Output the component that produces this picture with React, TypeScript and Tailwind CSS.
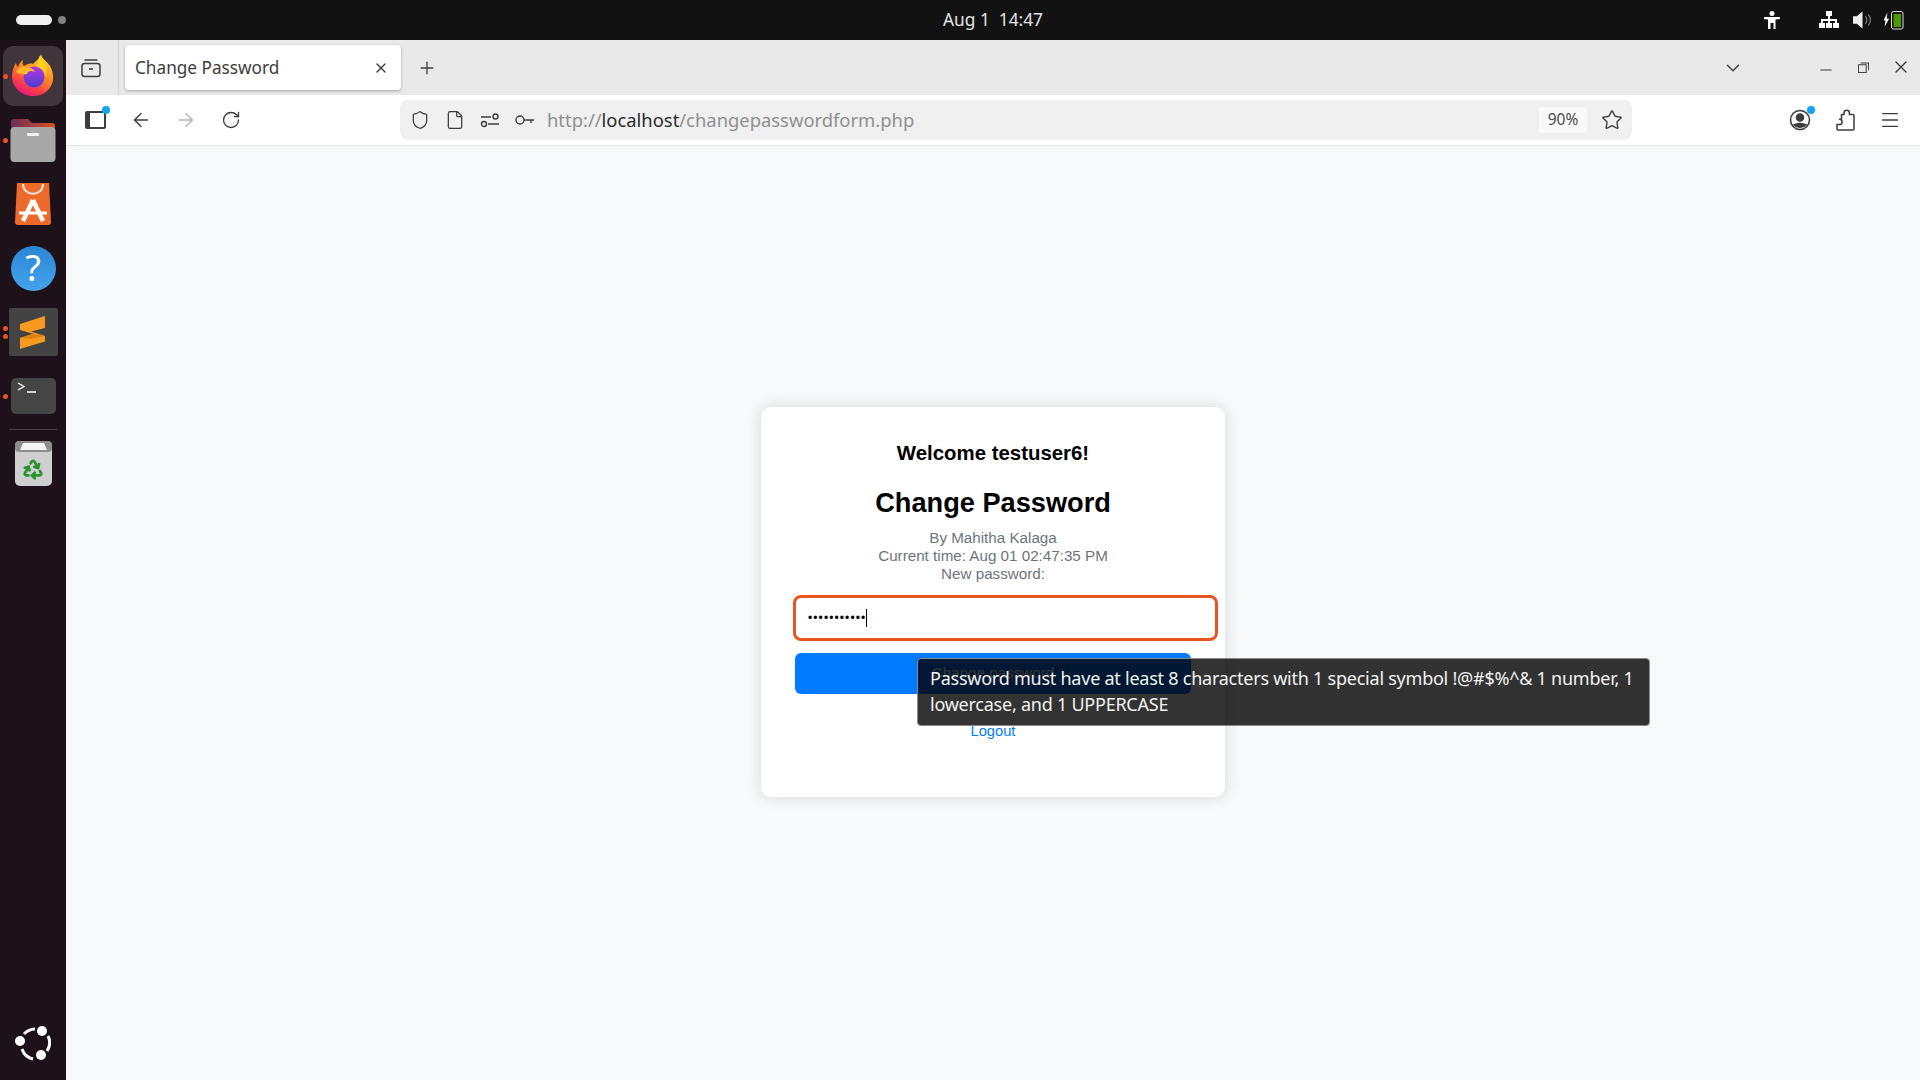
import React from 'react';
import { ArrowLeft, ArrowRight, RotateCw, Shield, File, Star, Menu, X, Plus, ChevronDown, Minus, Recycle } from 'lucide-react';

const ubuntu = { fontFamily: '"Noto Sans", sans-serif' };

function Firefox() {
  return (
    <svg viewBox="0 0 44 44" className="w-[44px] h-[44px] -translate-y-[2px]">
      <defs>
        <linearGradient id="ff1" x1="0.8" y1="0" x2="0.3" y2="1">
          <stop offset="0" stopColor="#ffe226" />
          <stop offset="0.45" stopColor="#ff8a1f" />
          <stop offset="0.8" stopColor="#ff3750" />
          <stop offset="1" stopColor="#e31587" />
        </linearGradient>
        <linearGradient id="ff2" x1="0.5" y1="0" x2="0.5" y2="1">
          <stop offset="0" stopColor="#b833e1" />
          <stop offset="1" stopColor="#4a3fd0" />
        </linearGradient>
      </defs>
      <path d="M30 2c1 5 5 6 9 12 4 7 4 15 1 20-4 7-11 10-18 10C10 44 1 35 1 24c0-5 2-10 4-13 0 2 1 3 2 4 1-3 3-6 5-7-1 3 0 5 1 6 3-2 6-3 9-2 3-3 7-6 8-10z" fill="url(#ff1)" />
      <circle cx="23" cy="25" r="10.5" fill="url(#ff2)" />
      <path d="M5 20c3-5 8-7 13-5 3 1 5 3 6 5-4-2-7-1-8 2-4 1-8 0-11-2z" fill="#ffb52e" />
      <path d="M28 4c4 4 9 10 7 21-1-6-5-10-10-11 2-3 3-6 3-10z" fill="#ffd31f" />
    </svg>
  );
}

function Files() {
  return (
    <svg viewBox="0 0 46 44" className="w-[46px] h-[44px]">
      <defs>
        <linearGradient id="fo" x1="0" y1="0" x2="1" y2="0">
          <stop offset="0" stopColor="#6d2c5a" />
          <stop offset="1" stopColor="#d9531e" />
        </linearGradient>
      </defs>
      <path d="M1 4a3 3 0 0 1 3-3h14l4 4h20a3 3 0 0 1 3 3v14H1z" fill="url(#fo)" />
      <rect x="0.5" y="9" width="45" height="35" rx="4" fill="#a8a8a8" />
      <rect x="17" y="15" width="12" height="3" rx="1" fill="#f2f2f2" />
    </svg>
  );
}

function Store() {
  return (
    <svg viewBox="0 0 36 42" className="w-[36px] h-[42px]">
      <path d="M2 0h32l2 39a3 3 0 0 1-3 3H3a3 3 0 0 1-3-3z" fill="#ee6a2c" />
      <path d="M8 1c0 13 20 13 20 0" fill="none" stroke="#f8e6dc" strokeWidth="2" />
      <path d="M18 17 8 38M18 17l10 21" stroke="#fff" strokeWidth="4.500" fill="none" />
      <path d="M4 30h28" stroke="#fff" strokeWidth="3" />
    </svg>
  );
}

function Help() {
  return (
    <div className="w-[45px] h-[45px] rounded-full bg-linear-to-b from-[#2a86d6] to-[#45a3ec] flex items-center justify-center text-white text-[36px] leading-none" style={ubuntu}>?</div>
  );
}

function Sublime() {
  return (
    <div className="w-[49px] h-[48px] rounded-[2px] bg-[#434343] flex items-center justify-center">
      <svg viewBox="0 0 26 33" className="w-[26px] h-[33px]">
        <path d="M0 8 25 0v12l-14 3.500L25 20v5.500L0 33V22l13-4.300L0 14z" fill="#f79a1f" />
        <path d="M0 22l13-4.300 12 2.300-14 3z" fill="#e0820f" />
      </svg>
    </div>
  );
}

function Terminal() {
  return (
    <div className="w-[45px] h-[36px] rounded-[5px] bg-[#454545] relative">
      <svg viewBox="0 0 20 12" className="absolute left-[6px] top-[4px] w-[20px] h-[12px]">
        <path d="M1 1l6 3.500L1 8M10 10h9" stroke="#fff" strokeWidth="1.400" fill="none" />
      </svg>
    </div>
  );
}

function Trash() {
  return (
    <div className="w-[37px] h-[45px] rounded-[5px] bg-[#cfcfcf] relative flex flex-col items-center">
      <svg viewBox="0 0 37 11" className="w-[37px] h-[11px]">
        <rect x="0" y="0" width="37" height="11" rx="4" fill="#8d8d8d" />
        <path d="M5 9 8 2h21l3 7z" fill="#f5f5f5" />
      </svg>
      <Recycle size={22} strokeWidth={3} className="text-[#2a9330] mt-[6px]" />
    </div>
  );
}

function Ubuntu() {
  return (
    <svg viewBox="0 0 36 36" className="w-[36px] h-[36px]">
      <path d="M9 8a15 15 0 0 1 11-5M33 10a15 15 0 0 1-1 15M18 33a15 15 0 0 1-11-10" fill="none" stroke="#fff" strokeWidth="3" />
      <circle cx="27" cy="5" r="5" fill="#fff" />
      <circle cx="5" cy="15" r="5" fill="#fff" />
      <circle cx="26" cy="29" r="5" fill="#fff" />
    </svg>
  );
}

function DockItem({ dots = 0, children }: { dots?: number; children: React.ReactNode }) {
  return (
    <div className="h-[64px] flex items-center justify-center relative">
      {dots > 0 && (
        <div className="absolute left-[3px] top-0 bottom-0 flex flex-col justify-center gap-[3px]">
          {Array.from({ length: dots }).map((_, i) => (
            <span key={i} className="w-[5px] h-[5px] rounded-full bg-[#e95420]" />
          ))}
        </div>
      )}
      {children}
    </div>
  );
}

function Dock() {
  return (
    <aside className="w-[66px] shrink-0 bg-[#1d1219] flex flex-col">
      <div className="pt-[4px] flex flex-col">
        <DockItem dots={1}>
          <div className="w-[60px] h-[60px] rounded-[10px] bg-[#3f353a] flex items-center justify-center">
            <Firefox />
          </div>
        </DockItem>
        <DockItem dots={1}><Files /></DockItem>
        <DockItem><Store /></DockItem>
        <DockItem><Help /></DockItem>
        <DockItem dots={2}><Sublime /></DockItem>
        <DockItem dots={1}><Terminal /></DockItem>
      </div>
      <div className="mx-[9px] h-px bg-[#4a4046] mt-[1px]" />
      <div className="mt-[1px]"><DockItem><Trash /></DockItem></div>
      <div className="mt-auto pb-[18px] flex justify-center"><Ubuntu /></div>
    </aside>
  );
}

function TopBar() {
  return (
    <header className="h-[40px] shrink-0 bg-[#121212] flex items-center px-[16px] relative text-white">
      <span className="w-[36px] h-[10px] rounded-full bg-[#f0f0f0]" />
      <span className="w-[8px] h-[8px] rounded-full bg-[#808080] ml-[6px]" />
      <div className="absolute left-[933px] w-[120px] text-center text-[17.300px] text-[#e4e4e4] whitespace-pre" style={ubuntu}>Aug 1  14:47</div>
      <div className="ml-auto flex items-center">
        <svg viewBox="0 0 16 18" className="w-[16px] h-[18px] mr-[39px]" fill="#fff">
          <circle cx="8" cy="2.500" r="2.500" />
          <path d="M0 6h16v2l-4.500.5V18H9.500v-6h-3v6H4V8.500L0 8z" />
        </svg>
        <svg viewBox="0 0 20 18" className="w-[20px] h-[18px] mr-[14px]" fill="#fff">
          <path d="M7 0h6v5h-2v3h7v4h2v5h-6v-5h2V10h-5v2h2v5H7v-5h2v-2H4v2h2v5H0v-5h2V8h7V5H7z" />
        </svg>
        <svg viewBox="0 0 20 18" className="w-[19px] h-[18px] mr-[12px]" fill="none">
          <path d="M0 5h4l6-5v18l-6-5H0z" fill="#eee" />
          <path d="M13 5c2 2 2 6 0 8M16 3c3 3 3 9 0 12" stroke="#888" strokeWidth="1.200" />
        </svg>
        <svg viewBox="0 0 20 20" className="w-[20px] h-[20px]">
          <path d="M4 1 0 10h2l-1 7 5-9H3.500z" fill="#fff" transform="translate(-0.300 1.500) scale(0.900)" />
          <rect x="7.500" y="1.500" width="11.500" height="17.500" rx="2" fill="none" stroke="#ddd" />
          <rect x="9.500" y="4" width="7.500" height="13" fill="#4e9a06" />
        </svg>
      </div>
    </header>
  );
}

function TabBar() {
  return (
    <div className="h-[55px] shrink-0 bg-[#e9e9e9] flex items-center relative">
      <div className="w-[53px] h-full border-r border-[#cfcfcf] flex items-center justify-center">
        <svg viewBox="0 0 20 20" className="w-[20px] h-[20px] -ml-[3px]" fill="none" stroke="#3d3d3d" strokeWidth="1.500">
          <rect x="1" y="5.500" width="18" height="13" rx="2.500" />
          <path d="M3.500 2h13M8 11h4" />
        </svg>
      </div>
      <div className="ml-[6px] w-[276px] h-[45px] rounded-[4px] bg-white shadow-[0_1px_3px_rgba(0,0,0,0.3)] flex items-center pl-[10px] pr-[12px]">
        <span className="text-[17.200px] text-[#3d3d3d]" style={ubuntu}>Change Password</span>
        <X className="ml-auto text-[#3d3d3d]" size={16} />
      </div>
      <Plus className="ml-[16px] text-[#3d3d3d]" size={20} strokeWidth={1.6} />
      <ChevronDown className="ml-auto mr-[176px] text-[#3d3d3d]" size={22} strokeWidth={1.6} />
      <div className="absolute right-[9px] top-[17px] flex items-center gap-[19px] text-[#3d3d3d]">
        <Minus size={18} strokeWidth={1.6} className="translate-y-[3px] mr-[4px]" />
        <svg viewBox="0 0 12 12" className="w-[11px] h-[11px]" fill="none" stroke="#3d3d3d" strokeWidth="1.100">
          <rect x="0.500" y="3" width="8.500" height="8.500" />
          <path d="M3 1h8.500v8" />
        </svg>
        <X size={20} strokeWidth={1.6} className="ml-[3px]" />
      </div>
    </div>
  );
}

function Toolbar() {
  return (
    <div className="h-[51px] shrink-0 bg-white border-b border-[#e4e6ea] flex items-center text-[#3d3d3d]">
      <div className="w-[334px] shrink-0 flex items-center pl-[19px] gap-[23px]">
        <div className="relative w-[21px] h-[18px] mr-[1px] rounded-[2px] border-2 border-l-[5px] border-[#3d3d3d]">
          <span className="absolute -right-[6px] -top-[7px] w-[8px] h-[8px] rounded-full bg-[#13a5f2]" />
        </div>
        <ArrowLeft size={22} strokeWidth={1.6} />
        <ArrowRight size={22} strokeWidth={1.6} className="text-[#b4b4b4]" />
        <RotateCw size={20} strokeWidth={1.6} className="ml-[1px]" />
      </div>
      <div className="w-[1232px] h-[40px] rounded-[8px] bg-[#f0f0f0] flex items-center pl-[10px] pr-[9px]">
        <Shield size={20} strokeWidth={1.5} />
        <File size={20} strokeWidth={1.5} className="ml-[15px]" />
        <svg viewBox="0 0 20 20" className="w-[20px] h-[20px] ml-[15px]" fill="none" stroke="#3d3d3d" strokeWidth="1.400">
          <path d="M1 7h10M8 14h11" />
          <circle cx="15.500" cy="6.500" r="2.500" />
          <circle cx="4" cy="14" r="2.500" />
        </svg>
        <svg viewBox="0 0 20 12" className="w-[20px] h-[12px] ml-[15px]" fill="none" stroke="#3d3d3d" strokeWidth="1.400">
          <circle cx="5" cy="6" r="4" />
          <path d="M9 6h10M16 6v3" />
        </svg>
        <div className="ml-[12px] text-[18.400px] text-[#8f8f8f]" style={ubuntu}>
          http://<span className="text-[#2b2b2b]">localhost</span>/changepasswordform.php
        </div>
        <div className="ml-auto w-[48px] h-[26px] rounded-[4px] bg-[#f9f9f9] flex items-center justify-center text-[15.500px] text-[#4a4a4a]" style={ubuntu}>90%</div>
        <Star size={22} strokeWidth={1.5} className="ml-[14px]" />
      </div>
      <div className="flex-1 flex items-center justify-end pr-[19px] gap-[24px]">
        <div className="relative w-[22px] h-[22px]">
          <svg viewBox="0 0 22 22" className="w-[22px] h-[22px]" fill="none" stroke="#3d3d3d" strokeWidth="1.600">
            <circle cx="11" cy="11" r="9.500" />
            <circle cx="11" cy="8.500" r="3.500" fill="#3d3d3d" />
            <path d="M5 16c3-2 9-2 12 0-3 3-9 3-12 0z" fill="#3d3d3d" />
          </svg>
          <span className="absolute -right-[4px] -top-[3px] w-[8px] h-[8px] rounded-full bg-[#13a5f2]" />
        </div>
        <svg viewBox="0 0 20 22" className="w-[20px] h-[22px]" fill="none" stroke="#3d3d3d" strokeWidth="1.500" strokeLinejoin="round">
          <path d="M6.500 5.500H9V4a2.700 2.700 0 0 1 5.400 0v1.500H18a1 1 0 0 1 1 1V20a1 1 0 0 1-1 1H3a1 1 0 0 1-1-1v-4.500h2.500a2.600 2.600 0 0 0 0-5.200h2z" />
        </svg>
        <Menu size={22} strokeWidth={1.5} />
      </div>
    </div>
  );
}

function Card() {
  return (
    <div className="w-[464px] h-[390px] bg-white rounded-[10px] shadow-[0_0_16px_rgba(0,0,0,0.14)] px-[34px] pt-[35px] text-center relative" style={{ fontFamily: '"Liberation Sans", Arial, sans-serif' }}>
      <h3 className="text-[20.400px] font-bold text-black leading-[23px]">Welcome testuser6!</h3>
      <h2 className="text-[27.200px] font-bold text-black leading-[32px] mt-[22px]">Change Password</h2>
      <p className="text-[15.200px] leading-[18px] text-[#6c757d] mt-[10px]">By Mahitha Kalaga</p>
      <p className="text-[15.200px] leading-[18px] text-[#6c757d]">Current time: Aug 01 02:47:35 PM</p>
      <p className="text-[15.200px] leading-[18px] text-[#6c757d]">New password:</p>
      <div className="mt-[12px] -ml-[2px] w-[425px] h-[46px] rounded-[8px] border-[3px] border-[#e95420] flex items-center pl-[12px] text-left">
        <span className="text-[12px] tracking-[1.100px] text-black leading-none">•••••••••••</span>
        <span className="w-px h-[18px] bg-black" />
      </div>
      <button className="mt-[12px] block w-[396px] h-[41px] rounded-[6px] bg-[#007bff] text-white text-[15.200px]">Change password</button>
      <a className="block mt-[29px] text-[14.700px] leading-[17px] text-[#007bff]">Logout</a>
    </div>
  );
}

export default function App() {
  return (
    <div className="w-[1920px] h-[1080px] overflow-hidden flex flex-col bg-[#f8f9fa]">
      <TopBar />
      <div className="flex-1 flex min-h-0">
        <Dock />
        <main className="flex-1 flex flex-col min-w-0">
          <TabBar />
          <Toolbar />
          <div className="flex-1 flex items-start justify-center pt-[261px] relative">
            <Card />
            <div className="absolute left-[851px] top-[512px] w-[733px] h-[68px] rounded-[4px] border border-[#8a8a8a] bg-black/80 px-[12px] pt-[6px] text-[18px] tracking-[-0.240px] leading-[26px] text-[#f2f2f2]" style={ubuntu}>
              Password must have at least 8 characters with 1 special symbol !@#$%^&amp; 1 number, 1 lowercase, and 1 UPPERCASE
            </div>
          </div>
        </main>
      </div>
    </div>
  );
}
